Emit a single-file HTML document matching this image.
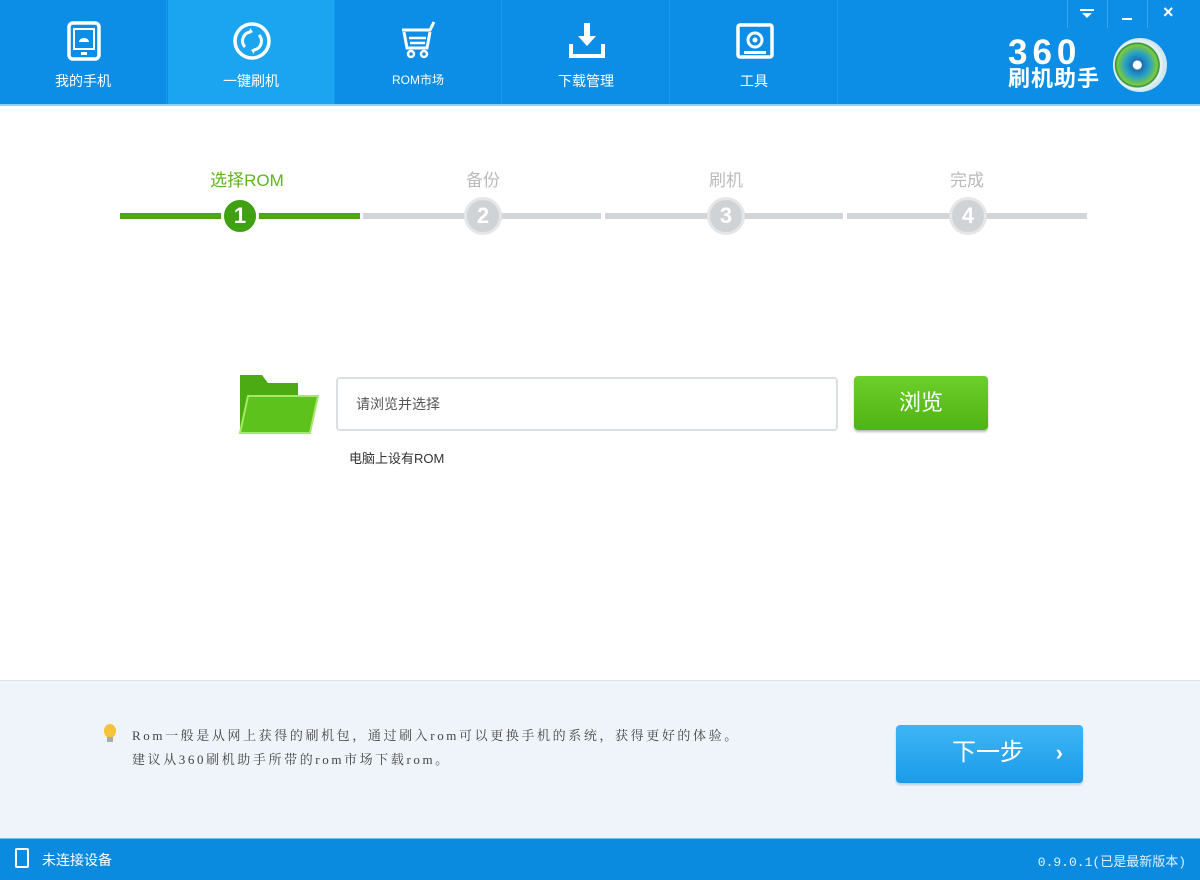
<!DOCTYPE html>
<html><head><meta charset="utf-8"><style>
*{margin:0;padding:0;box-sizing:border-box}
body{width:1200px;height:880px;overflow:hidden;background:#fff;font-family:"Liberation Sans","Noto Sans CJK SC",sans-serif;position:relative}
.hdr{position:absolute;left:0;top:0;width:1200px;height:106px;background:#0c8ee6;border-bottom:2px solid #8fd3f7}
.tab{position:absolute;top:0;width:167px;height:104px;color:#fff;text-align:center;font-size:14px;border-right:1px solid #1a98ea}
.tab.act{background:#1ba5f0}
.tab svg{position:absolute;left:63px;top:20px}
.tab span{position:absolute;left:0;right:0;top:71px}
.step{position:absolute;top:166px;font-size:17px;color:#bbb;width:120px;text-align:center}
.bar{position:absolute;top:213px;height:6px;background:#d2d6da}
.c{position:absolute;top:197px;width:38px;height:38px;border-radius:50%;background:#cfd3d6;border:3px solid #e4e6e8;color:#fff;font-size:22px;font-weight:bold;text-align:center;line-height:32px}
</style></head><body>
<div class="hdr">
<div class="tab" style="left:0"><svg width="42" height="42" viewBox="0 0 42 42"><rect x="6" y="3" width="30" height="36" rx="4" fill="none" stroke="#fff" stroke-width="3.5"/><rect x="11" y="9" width="20" height="20" fill="none" stroke="#fff" stroke-width="2"/><path d="M16 22a5 4 0 0 1 10 0z" fill="#fff"/><rect x="18" y="32" width="6" height="3" fill="#fff"/></svg><span>我的手机</span></div>
<div class="tab act" style="left:168px"><svg width="42" height="42" viewBox="0 0 42 42"><circle cx="21" cy="21" r="17" fill="none" stroke="#fff" stroke-width="3.5"/><path d="M14 27a9 9 0 0 1 5-15M28 15a9 9 0 0 1-5 15" fill="none" stroke="#fff" stroke-width="3"/><path d="M19 8l3 4-4 2zM23 34l-3-4 4-2z" fill="#fff"/></svg><span>一键刷机</span></div>
<div class="tab" style="left:335px"><svg width="42" height="42" viewBox="0 0 42 42"><path d="M4 10h28l4-8" fill="none" stroke="#fff" stroke-width="3"/><path d="M6 12l3 16h20l3-16" fill="none" stroke="#fff" stroke-width="3"/><path d="M11 18h17M12 23h15" stroke="#fff" stroke-width="2.5"/><circle cx="13" cy="34" r="3" fill="none" stroke="#fff" stroke-width="2.5"/><circle cx="26" cy="34" r="3" fill="none" stroke="#fff" stroke-width="2.5"/></svg><span style="font-size:12px">ROM市场</span></div>
<div class="tab" style="left:503px"><svg width="42" height="42" viewBox="0 0 42 42"><path d="M18 3h6v13h6l-9 10-9-10h6z" fill="#fff"/><path d="M5 24v12h32V24" fill="none" stroke="#fff" stroke-width="4"/></svg><span>下载管理</span></div>
<div class="tab" style="left:671px"><svg width="42" height="42" viewBox="0 0 42 42"><rect x="4" y="5" width="34" height="32" rx="2" fill="none" stroke="#fff" stroke-width="3.5"/><circle cx="21" cy="20" r="7" fill="none" stroke="#fff" stroke-width="3"/><circle cx="21" cy="20" r="2.5" fill="#fff"/><rect x="10" y="31" width="22" height="3" fill="#fff"/></svg><span>工具</span></div>
<div style="position:absolute;left:1067px;top:0;width:1px;height:28px;background:#3aa5ec"></div>
<div style="position:absolute;left:1107px;top:0;width:1px;height:28px;background:#3aa5ec"></div>
<div style="position:absolute;left:1147px;top:0;width:1px;height:28px;background:#3aa5ec"></div>
<div style="position:absolute;left:1080px;top:9px;width:14px;height:2px;background:#fff"></div>
<div style="position:absolute;left:1082px;top:13px;width:0;height:0;border-left:5px solid transparent;border-right:5px solid transparent;border-top:5px solid #fff"></div>
<div style="position:absolute;left:1122px;top:18px;width:10px;height:2px;background:#fff"></div>
<div style="position:absolute;left:1163px;top:2px;color:#fff;font-size:18px;font-weight:bold">×</div>
<div style="position:absolute;left:1008px;top:38px;color:#fff;font-size:35px;font-weight:bold;letter-spacing:5px;line-height:30px">360</div>
<div style="position:absolute;left:1008px;top:66px;color:#fff;font-size:22px;line-height:26px;font-weight:bold;letter-spacing:1px">刷机助手</div>
<div style="position:absolute;left:1113px;top:38px;width:54px;height:54px;border-radius:50%;background:radial-gradient(circle at 45% 50%,#fff 0 4px,#1a6fb0 5px,#27a0c8 12px,#7ccb3a 20px,#2c8b4a 22px,#e9f4f2 23px,#cfe6ee 27px);"></div>
</div>

<div class="step" style="left:187px;color:#5db61b">选择ROM</div>
<div class="step" style="left:423px">备份</div>
<div class="step" style="left:666px">刷机</div>
<div class="step" style="left:907px">完成</div>
<div class="bar" style="left:120px;width:240px;background:#4ea815"></div>
<div class="bar" style="left:363px;width:238px"></div>
<div class="bar" style="left:605px;width:238px"></div>
<div class="bar" style="left:847px;width:240px"></div>
<div class="c" style="left:221px;background:#3fa012;border-color:#fff">1</div>
<div class="c" style="left:464px">2</div>
<div class="c" style="left:707px">3</div>
<div class="c" style="left:949px">4</div>

<svg style="position:absolute;left:238px;top:372px" width="82" height="62" viewBox="0 0 82 62"><path d="M2 3h22l6 8h30v50H2z" fill="#4caa12"/><path d="M10 24h70l-8 37H2z" fill="#5ec21c" stroke="#a6e86a" stroke-width="2"/></svg>
<div style="position:absolute;left:336px;top:377px;width:502px;height:54px;border:2px solid #dcdfe2;border-radius:4px;background:#fff;font-size:14px;color:#555;padding:15px 0 0 18px">请浏览并选择</div>
<div style="position:absolute;left:854px;top:376px;width:134px;height:54px;border-radius:4px;background:linear-gradient(#6dcf2a,#4fb314);color:#fff;font-size:22px;text-align:center;line-height:54px;box-shadow:0 2px 2px #bbb">浏览</div>
<div style="position:absolute;left:349px;top:448px;font-size:13px;color:#333">电脑上设有ROM</div>

<div style="position:absolute;left:0;top:680px;width:1200px;height:158px;background:#eef4f9;border-top:1px solid #dde6ee"></div>
<div style="position:absolute;left:104px;top:724px;width:12px;height:14px;border-radius:50%;background:#f6c23a"></div>
<div style="position:absolute;left:107px;top:737px;width:6px;height:5px;background:#aaa"></div>
<div style="position:absolute;left:132px;top:724px;font-size:13px;color:#444;line-height:24px;letter-spacing:2.6px;font-family:'Liberation Serif','Noto Serif CJK SC',serif">Rom一般是从网上获得的刷机包，通过刷入rom可以更换手机的系统，获得更好的体验。<br>建议从360刷机助手所带的rom市场下载rom。</div>
<div style="position:absolute;left:896px;top:725px;width:187px;height:58px;border-radius:4px;background:linear-gradient(#3fb5f5,#1a9be9);color:#fff;font-size:24px;line-height:56px;padding-left:56px;box-shadow:0 2px 2px #b9cad8">下一步<span style="position:absolute;right:20px;font-weight:bold;font-size:22px">›</span></div>

<div style="position:absolute;left:0;top:838px;width:1200px;height:42px;background:#0b8be0;border-top:1px solid #6cc5f5"></div>
<div style="position:absolute;left:15px;top:848px;width:14px;height:20px;border:2px solid #fff;border-radius:2px"></div>
<div style="position:absolute;left:42px;top:850px;color:#fff;font-size:14px">未连接设备</div>
<div style="position:absolute;right:14px;top:851px;color:#dfefff;font-size:13px;font-family:'Liberation Mono','Noto Sans CJK SC',monospace">0.9.0.1(已是最新版本)</div>
</body></html>
